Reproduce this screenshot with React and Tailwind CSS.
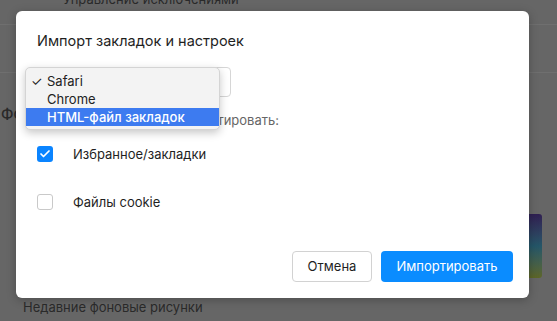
import { Check } from "lucide-react";

const font = { fontFamily: '"Inter", "Liberation Sans", sans-serif' };

function Checkbox({ checked }) {
  if (checked) {
    return (
      <span className="flex h-4 w-4 items-center justify-center rounded-[3px] bg-[#0a84ff]">
        <Check className="h-3 w-3 text-white" strokeWidth={3.5} />
      </span>
    );
  }
  return <span className="block h-4 w-4 rounded-[3px] border border-[#c9c9c9] bg-white" />;
}

export default function App() {
  const sources = ["Safari", "Chrome", "HTML-файл закладок"];
  const selected = 0;
  const hovered = 2;

  return (
    <div
      className="relative h-[321px] w-[557px] overflow-hidden bg-[#666666] text-[#2a2a2a]"
      style={font}
    >
      {/* страница под диалогом */}
      <div className="mt-[-9px] pl-[63px] text-[13px] leading-[16px]">Управление исключениями</div>
      <div className="mt-[17px] border-t border-[#6f6f6f]" />
      <div className="mt-[47px] border-t border-[#6f6f6f]" />
      <div className="mt-[32px] pl-[1px] text-[15px] font-medium leading-[18px]">Фон новой вкладки</div>
      <div className="flex justify-end pr-[15px] pt-[91px]">
        <div className="h-[64px] w-[40px] rounded-[3px] bg-gradient-to-b from-[#2f1f52] via-[#245668] to-[#5d6626]" />
      </div>
      <div className="mt-[21px] pl-[23px] text-[13px] leading-[16px]">Недавние фоновые рисунки</div>

      {/* диалог */}
      <div className="absolute left-[16px] top-[11px] flex h-[287px] w-[513px] flex-col rounded-[6px] bg-white shadow-[0_2px_10px_rgba(0,0,0,0.25)]">
        <div className="pl-[21px] pt-[21px] text-[14.5px] leading-[18px] text-[#1f1f1f]">
          Импорт закладок и настроек
        </div>
        <div className="ml-[21px] mt-[17px] h-[30px] w-[194px] rounded-[4px] border border-[#d6d6d6] bg-white" />
        <div className="ml-[21px] mt-[15px] text-[13px] leading-[16px] text-[#666]">
          Выберите, что нужно импортировать:
        </div>
        <div className="ml-[21px] mt-[18px] flex items-center gap-[20px] text-[13px] leading-[16px] text-[#1f1f1f]">
          <Checkbox checked />
          <span>Избранное/закладки</span>
        </div>
        <div className="ml-[21px] mt-[32px] flex items-center gap-[20px] text-[13px] leading-[16px] text-[#1f1f1f]">
          <Checkbox />
          <span>Файлы cookie</span>
        </div>
        <div className="mt-auto flex justify-end gap-[9px] pb-[16px] pr-[16px] text-[13px]">
          <button className="h-[31px] w-[80px] rounded-[4px] border border-[#d2d2d2] bg-white text-[#1f1f1f]">
            Отмена
          </button>
          <button className="h-[31px] w-[132px] rounded-[4px] bg-[#0a8cff] text-white">
            Импортировать
          </button>
        </div>

        {/* открытый список */}
        <div className="absolute left-[9px] top-[56px] w-[195px] rounded-[5px] border border-[#d4d4d4] bg-[#f3f3f3] pb-[3px] pt-[4px] shadow-[0_3px_8px_rgba(0,0,0,0.22)]">
          {sources.map((s, i) => (
            <div
              key={s}
              className={
                "flex h-[18px] items-center text-[13px] leading-[16px] " +
                (i === hovered ? "bg-[#3d7bf0] font-medium text-white" : "text-[#222]")
              }
            >
              <span className="w-[21px] pl-[5px] text-[13px]">{i === selected ? "✓" : ""}</span>
              <span>{s}</span>
            </div>
          ))}
        </div>
      </div>
    </div>
  );
}
